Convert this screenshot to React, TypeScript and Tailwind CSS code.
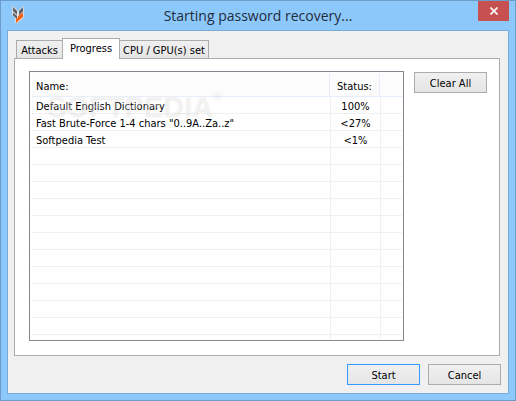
import React from "react";

type Attack = { name: string; status: string };

const attacks: Attack[] = [
  { name: "Default English Dictionary", status: "100%" },
  { name: 'Fast Brute-Force 1-4 chars "0..9A..Za..z"', status: "<27%" },
  { name: "Softpedia Test", status: "<1%" },
];

const EMPTY_ROWS = 11;

const buttonClass =
  "h-[21px] w-[73px] border bg-linear-to-b from-[#f0f0f0] to-[#e5e5e5] pt-0.5 text-center";

function AppIcon() {
  return (
    <svg viewBox="0 0 12 18" className="h-[18px] w-3" aria-hidden="true">
      <path
        d="M1 2l4 4 1 2 1-2 4-4v10l-3 3-4 3v-5l-3-3z"
        fill="#e9e4e2"
        stroke="#e9e4e2"
        strokeWidth="1.500"
        strokeLinejoin="round"
      />
      <path d="M1 2l4 4v4L1 6zM11 2L7 6v4l4-3.500zM1 7.500L5 11v3l-4-3.500z" fill="#5d6068" />
      <path d="M11 7.500V12l-3 2.500L4 18v-4l2-1.500V11z" fill="#f26414" />
    </svg>
  );
}

function TitleBar() {
  return (
    <header className="relative flex h-[29px] items-center justify-center">
      <div className="absolute top-1 left-[5px]">
        <AppIcon />
      </div>
      <h1 className="text-[14px] leading-5 text-[#1f2c3c] font-['Open_Sans','Noto_Sans',sans-serif]">
        Starting password recovery...
      </h1>
      <button
        type="button"
        aria-label="Close"
        className="absolute top-0 right-0 flex h-5 w-[31px] items-center justify-center bg-[#c75050]"
      >
        <svg viewBox="0 0 8 8" className="size-2" aria-hidden="true">
          <path d="M0.500 0.500l7 7M7.500 0.500l-7 7" stroke="#fff" strokeWidth="1.600" />
        </svg>
      </button>
    </header>
  );
}

function Tabs() {
  const idle =
    "h-[18px] border border-b-0 border-[#acacac] bg-linear-to-b from-[#f0f0f0] to-[#e5e5e5] pt-0.5";

  return (
    <div role="tablist" className="flex items-end pl-0.5">
      <button type="button" role="tab" aria-selected="false" className={`${idle} w-[46px] border-r-0`}>
        Attacks
      </button>
      <button
        type="button"
        role="tab"
        aria-selected="true"
        className="relative -mb-px h-[21px] w-[58px] border border-b-0 border-[#acacac] bg-white"
      >
        Progress
      </button>
      <button type="button" role="tab" aria-selected="false" className={`${idle} w-[89px] border-l-0`}>
        CPU / GPU(s) set
      </button>
    </div>
  );
}

function ProgressTable() {
  return (
    <div className="relative flex-1 border border-[#828790] p-px">
      <table className="w-full table-fixed border-separate border-spacing-0 leading-[13px]">
        <colgroup>
          <col />
          <col className="w-[50px]" />
          <col className="w-[22px]" />
        </colgroup>
        <thead className="bg-[#fcfcfc]">
          <tr className="h-6">
            <th className="border-r border-b border-[#e5eef9] p-0 pt-[3px] pl-[5px] text-left font-normal">Name:</th>
            <th className="border-r border-b border-[#e5eef9] p-0 pt-[3px] text-center font-normal">Status:</th>
            <th className="border-b border-[#e5eef9] p-0" />
          </tr>
        </thead>
        <tbody>
          {attacks.map((attack) => (
            <tr key={attack.name} className="h-[17px]">
              <td className="border-b border-[#f0f0f0] p-0 pt-[3px] pl-[5px]">{attack.name}</td>
              <td className="border-b border-l border-[#f0f0f0] p-0 pt-[3px] text-center">{attack.status}</td>
              <td className="border-b border-l border-[#f0f0f0] p-0" />
            </tr>
          ))}
          {Array.from({ length: EMPTY_ROWS }, (_, i) => (
            <tr key={i} className="h-[17px]">
              <td className="border-b border-[#f0f0f0] p-0" />
              <td className="border-b border-l border-[#f0f0f0] p-0" />
              <td className="border-b border-l border-[#f0f0f0] p-0" />
            </tr>
          ))}
          <tr className="h-1">
            <td className="p-0" />
            <td className="border-l border-[#f0f0f0] p-0" />
            <td className="border-l border-[#f0f0f0] p-0" />
          </tr>
        </tbody>
      </table>
      <Watermark />
    </div>
  );
}

function Watermark() {
  return (
    <div
      aria-hidden="true"
      className="pointer-events-none absolute top-4 left-4 flex items-start font-['Liberation_Sans',sans-serif] text-[29px] leading-9 font-bold text-white/30 [text-shadow:1px_1px_2px_rgb(0_0_0/0.08)]"
    >
      SOFTPEDIA
      <span className="text-xs leading-4">®</span>
    </div>
  );
}

export default function App() {
  return (
    <div className="flex min-h-screen w-full flex-col border border-[#6c9cc8] bg-[#8dc8fb] px-1.5 pb-1.5 font-['DejaVu_Sans_Condensed','DejaVu_Sans',sans-serif] text-[11px] leading-4 text-black">
      <TitleBar />
      <main className="flex flex-1 flex-col border border-[#78acdc] bg-[#f0f0f0] px-1.5 pt-[7px] pb-2">
        <Tabs />
        <section className="mr-0.5 flex flex-1 items-start gap-2.5 border border-[#acacac] bg-white py-3 pr-3 pl-3.5">
          <ProgressTable />
          <button type="button" className={`${buttonClass} mt-px border-[#acacac]`}>
            Clear All
          </button>
        </section>
        <footer className="mt-2 flex justify-end gap-2 pr-px">
          <button type="button" className={`${buttonClass} border-[#3399ff]`}>
            Start
          </button>
          <button type="button" className={`${buttonClass} border-[#acacac]`}>
            Cancel
          </button>
        </footer>
      </main>
    </div>
  );
}
